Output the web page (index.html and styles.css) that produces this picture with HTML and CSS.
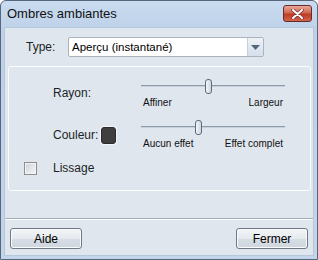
FILE: index.html
```html
<!DOCTYPE html>
<html lang="fr">
<head>
  <meta charset="UTF-8">
  <title>Ombres ambiantes</title>
  <link rel="stylesheet" href="styles.css">
</head>
<body>
<div class="window">
  <div class="titlebar">
    <span class="title">Ombres ambiantes</span>
    <span class="close">
      <svg width="13" height="10" viewBox="0 0 13 10">
        <path d="M2 1 L11 9 M11 1 L2 9" stroke="#7a2e2e" stroke-width="3.4" stroke-linecap="round"/>
        <path d="M2 1 L11 9 M11 1 L2 9" stroke="#fff" stroke-width="2" stroke-linecap="round"/>
      </svg>
    </span>
  </div>
  <div class="client">
    <div class="type-row">
      <span class="lbl type-lbl">Type:</span>
      <div class="select">
        <span class="value">Aperçu (instantané)</span>
        <span class="drop"><svg width="9" height="5" viewBox="0 0 9 5"><path d="M0 0 H9 L4.5 5 Z" fill="#56667a"/></svg></span>
      </div>
    </div>
    <div class="group">
      <div class="row r-rayon">
        <span></span>
        <span class="lbl">Rayon:</span>
        <div class="slider">
          <div class="track"><span class="thumb" style="left:64px"></span></div>
          <div class="ends"><span>Affiner</span><span>Largeur</span></div>
        </div>
      </div>
      <div class="row r-couleur">
        <span></span>
        <span class="lbl couleur">Couleur: <span class="swatch"></span></span>
        <div class="slider">
          <div class="track"><span class="thumb" style="left:54px"></span></div>
          <div class="ends"><span>Aucun effet</span><span>Effet complet</span></div>
        </div>
      </div>
      <div class="row r-lissage">
        <span class="check"></span>
        <span class="lbl">Lissage</span>
      </div>
    </div>
    <div class="sep"></div>
    <div class="buttons">
      <span class="btn">Aide</span>
      <span class="btn">Fermer</span>
    </div>
  </div>
</div>
</body>
</html>
```

FILE: styles.css
```css
*{margin:0;padding:0;box-sizing:border-box}
body{width:318px;height:260px;overflow:hidden;font-family:"Liberation Sans",Arial,sans-serif;font-size:12px;color:#1b1f26;background:#fff}
.window{width:318px;height:260px;display:flex;flex-direction:column;border:1px solid #56677c;border-radius:6px 6px 0 0;background:linear-gradient(#c9dbef,#bdd1e9 30px,#c2d5eb);padding:0 3px 3px}
.titlebar{height:26px;display:flex;align-items:center;justify-content:space-between;padding:0 2px 2px 3px}
.title{font-size:13px;color:#111}
.close{width:29px;height:17px;margin-top:1px;border:1px solid #6b2a2a;border-radius:3px;background:linear-gradient(#e8a99b,#d0664f 45%,#bf3b24 55%,#d0654c);display:flex;align-items:center;justify-content:center}
.client{flex:1;background:#dfe6ee;border:1px solid #b6c7da;display:flex;flex-direction:column}
.type-row{display:flex;align-items:center;margin-top:9px;height:20px}
.type-lbl{margin-left:21px;width:42px}
.select{width:196px;height:20px;background:#fff;border:1px solid #a9b4c0;border-radius:2px;display:flex;align-items:center;justify-content:space-between;padding-left:3px}
.value{font-size:11.5px;color:#000}
.drop{width:16px;height:18px;border-left:1px solid #c4cfdb;background:linear-gradient(#eef2f7,#d5dfea);display:flex;align-items:center;justify-content:center}
.group{margin:9px 2px 0 3px;height:125px;border:1px solid #fbfcfd;border-radius:3px;padding-top:12px;display:flex;flex-direction:column;gap:11px}
.row{display:grid;grid-template-columns:44px 88px 144px;align-items:center}
.r-rayon .lbl{margin-top:-2px}
.r-lissage{height:13px}
.slider{height:30px;display:flex;flex-direction:column}
.track{position:relative;height:15px}
.track:before{content:"";position:absolute;left:0;right:0;top:6px;height:1px;background:#8e9caa}
.track:after{content:"";position:absolute;left:0;right:0;top:7px;height:1px;background:#c7d0da}
.thumb{position:absolute;top:0;width:7px;height:15px;border:1px solid #5c6b7c;border-radius:3px;background:linear-gradient(90deg,#f3f6f9,#cdd6e0);z-index:1}
.ends{display:flex;justify-content:space-between;font-size:10px;color:#111;margin-top:3px;padding:0 2px}
.couleur{display:flex;align-items:center;gap:3px}
.swatch{width:15px;height:17px;background:#3f3f3f;border:1px solid #2b2b2b;border-radius:3px;box-shadow:0 0 0 1px #f4f6f9}
.check{width:13px;height:13px;margin-left:15px;border:1px solid #8e8f8f;background:linear-gradient(135deg,#cfd3d7,#f6f7f8);box-shadow:inset 0 0 0 1px #f4f4f4}
.sep{margin-top:27px;height:2px;border-top:1px solid #a3acb6;border-bottom:1px solid #fbfcfd}
.buttons{display:flex;justify-content:space-between;padding:0 5px;margin-top:8px}
.btn{width:72px;height:21px;border:1px solid #707a86;border-radius:3px;background:linear-gradient(#f3f5f7,#e6eaee 50%,#d6dde4 51%,#cfd6de);display:flex;align-items:center;justify-content:center;font-size:12px;color:#000;box-shadow:inset 0 0 0 1px #f8fafc}
```
